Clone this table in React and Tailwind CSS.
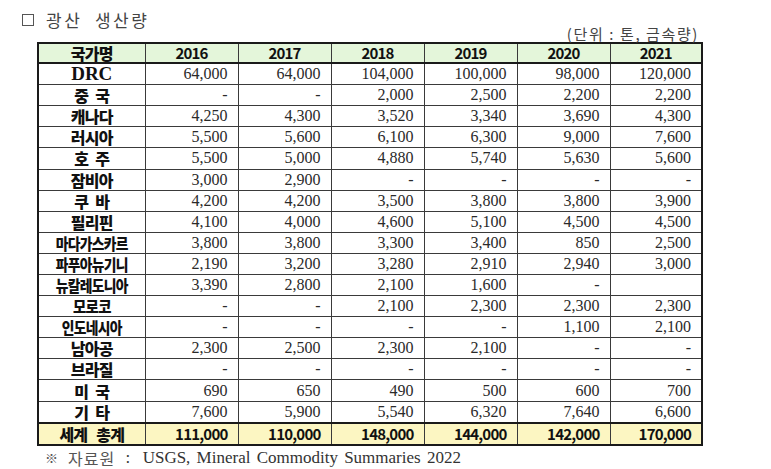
import React from "react";

const rows = [
  ["DRC", ["64,000", "64,000", "104,000", "100,000", "98,000", "120,000"], "drc"],
  ["중 국", ["-", "-", "2,000", "2,500", "2,200", "2,200"], "two"],
  ["캐나다", ["4,250", "4,300", "3,520", "3,340", "3,690", "4,300"]],
  ["러시아", ["5,500", "5,600", "6,100", "6,300", "9,000", "7,600"]],
  ["호 주", ["5,500", "5,000", "4,880", "5,740", "5,630", "5,600"], "two"],
  ["잠비아", ["3,000", "2,900", "-", "-", "-", "-"]],
  ["쿠 바", ["4,200", "4,200", "3,500", "3,800", "3,800", "3,900"], "two"],
  ["필리핀", ["4,100", "4,000", "4,600", "5,100", "4,500", "4,500"]],
  ["마다가스카르", ["3,800", "3,800", "3,300", "3,400", "850", "2,500"], "narrow"],
  ["파푸아뉴기니", ["2,190", "3,200", "3,280", "2,910", "2,940", "3,000"], "narrow"],
  ["뉴칼레도니아", ["3,390", "2,800", "2,100", "1,600", "-", ""], "narrow"],
  ["모로코", ["-", "-", "2,100", "2,300", "2,300", "2,300"], "moro"],
  ["인도네시아", ["-", "-", "-", "-", "1,100", "2,100"], "narrow"],
  ["남아공", ["2,300", "2,500", "2,300", "2,100", "-", "-"]],
  ["브라질", ["-", "-", "-", "-", "-", "-"]],
  ["미 국", ["690", "650", "490", "500", "600", "700"], "two"],
  ["기 타", ["7,600", "5,900", "5,540", "6,320", "7,640", "6,600"], "two"],
];

const years = ["2016", "2017", "2018", "2019", "2020", "2021"];

const kr = { fontFamily: '"Noto Sans CJK KR", "Noto Sans", sans-serif' };
const serif = { fontFamily: '"Liberation Serif", "DejaVu Serif", serif' };

function NameCell({ name, kind }) {
  if (kind === "drc") {
    return (
      <td className="border border-[#3a3a3a] text-center align-middle p-0 text-[19px] font-bold text-[#111] leading-[18px]" style={serif}>
        {name}
      </td>
    );
  }
  let inner;
  if (kind === "narrow") {
    inner = <span className="inline-block scale-x-[0.86] whitespace-pre leading-[18px]">{name}</span>;
  } else if (kind === "moro") {
    inner = <span className="inline-block scale-x-[0.9] whitespace-pre leading-[18px]">{name}</span>;
  } else if (kind === "two") {
    const [a, b] = name.split(" ");
    inner = (
      <span className="inline-flex gap-[7px] leading-[18px]">
        <span>{a}</span>
        <span>{b}</span>
      </span>
    );
  } else {
    inner = <span className="whitespace-pre">{name}</span>;
  }
  return (
    <td className="border border-[#3a3a3a] text-center align-middle p-0 text-[16px] font-black text-[#111] leading-[18px] tracking-[-0.8px]" style={kr}>
      {inner}
    </td>
  );
}

export default function App() {
  return (
    <div className="w-[771px] h-[469px] bg-white overflow-hidden flex flex-col">
      <div className="h-[25px] pt-[10px] pl-[22px] flex items-center gap-[12px]">
        <div className="w-[12px] h-[12px] border border-[#555] mt-[5px]" />
        <span className="text-[17px] text-[#444] tracking-[2.5px] mt-[5px] leading-[18px]" style={kr}>
          광산&nbsp;&nbsp;생산량
        </span>
      </div>
      <div className="w-[664px] ml-[37px]">
        <div className="h-[17px] text-right text-[15px] leading-[17px] text-[#444] pr-[2px] tracking-[1.6px] whitespace-pre" style={kr}>
          (단위 : 톤, 금속량)
        </div>
        <table className="w-[664px] h-[404px] border-collapse border-2 border-[#1a1a1a] table-fixed">
          <colgroup>
            <col className="w-[107px]" />
            <col className="w-[93px]" />
            <col className="w-[93px]" />
            <col className="w-[93px]" />
            <col className="w-[93px]" />
            <col className="w-[93px]" />
            <col className="w-[92px]" />
          </colgroup>
          <thead>
            <tr className="bg-[#e4f6da]">
              <th className="border border-[#3a3a3a] border-b-2 border-b-[#1a1a1a] text-center p-0 text-[16px] font-black text-[#111] leading-[18px] tracking-[-0.8px]" style={kr}>
                국가명
              </th>
              {years.map((y) => (
                <th key={y} className="border border-[#3a3a3a] border-b-2 border-b-[#1a1a1a] text-center p-0 text-[15px] font-bold text-[#111] leading-[18px] tracking-[-0.8px]" style={kr}>
                  {y}
                </th>
              ))}
            </tr>
          </thead>
          <tbody>
            {rows.map(([name, vals, kind]) => (
              <tr key={name}>
                <NameCell name={name} kind={kind} />
                {vals.map((v, i) => (
                  <td key={i} className="border border-[#3a3a3a] text-right align-middle p-0 pr-[10px] text-[16px] text-[#2a2a2a] leading-[18px]" style={serif}>
                    {v}
                  </td>
                ))}
              </tr>
            ))}
            <tr className="bg-[#fcf6c2]">
              <td className="border border-[#3a3a3a] border-t-2 border-t-[#1a1a1a] text-center p-0 text-[16px] font-black text-[#111] leading-[18px] tracking-[-0.8px]" style={kr}>
                <span className="inline-flex gap-[9px]">
                  <span>세계</span>
                  <span>총계</span>
                </span>
              </td>
              {["111,000", "110,000", "148,000", "144,000", "142,000", "170,000"].map((v, i) => (
                <td key={i} className="border border-[#3a3a3a] border-t-2 border-t-[#1a1a1a] text-right p-0 pr-[10px] text-[15px] font-bold text-[#111] leading-[18px] tracking-[-0.8px]" style={kr}>
                  {v}
                </td>
              ))}
            </tr>
          </tbody>
        </table>
      </div>
      <div className="mt-[3px] ml-[45px] h-[18px] text-[17px] leading-[18px] text-[#333] whitespace-nowrap flex items-center" style={serif}>
        <span className="text-[13px] leading-[16px] text-[#555]" style={kr}>※</span>
        <span className="ml-[10px] text-[16px] leading-[16px] text-[#555] tracking-[1px]" style={kr}>자료원</span>
        <span className="ml-[4px] whitespace-pre [word-spacing:2px]"> :  USGS, Mineral Commodity Summaries 2022</span>
      </div>
    </div>
  );
}
